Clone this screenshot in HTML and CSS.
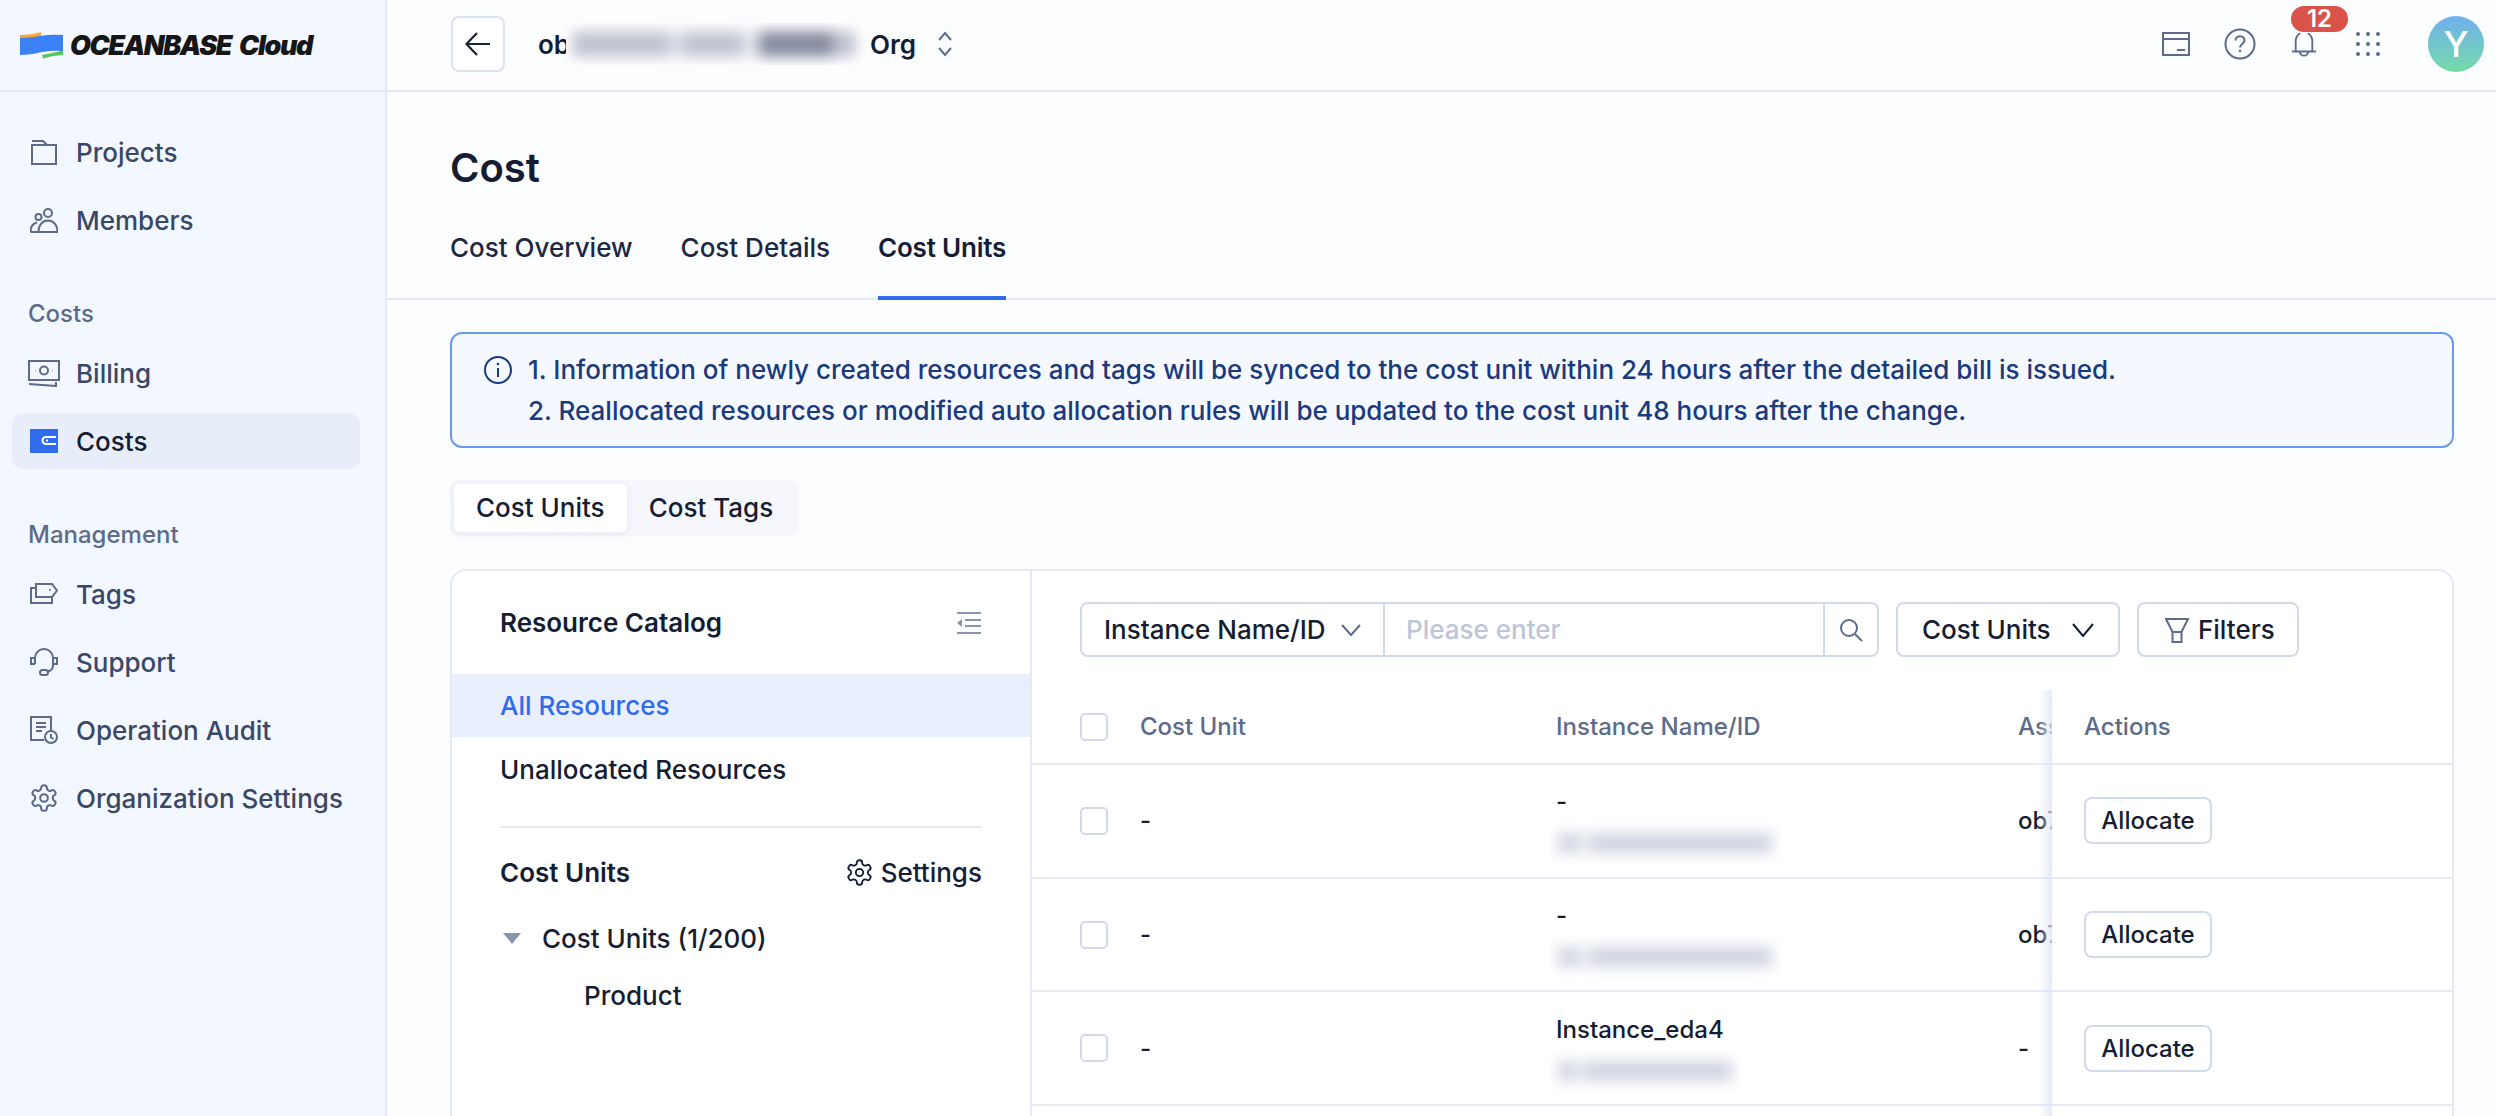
FILE: index.html
```html
<!DOCTYPE html>
<html lang="en">

<head>
  <meta name="viewport" content="width=device-width, initial-scale=1.0" />
  <title>Cost Units</title>
  <link rel="stylesheet" href="styles.css">
</head>

<body>

  <div class="app">

    <aside class="sidebar">
      <div class="logo">
        <svg class="logo-mark" viewBox="0 0 44 28">
          <path d="M0 4 Q12 4 21 1 V5.500 Q12 7.500 0 7.500z" fill="#f5a63c" />
          <path d="M0 7 Q10 7 20 5 Q32 3 43 4 V20 Q32 19 22 21 Q10 24 0 24z" fill="#3a80f6" />
          <path d="M22 24 Q33 22 43 19.500 V24 Q33 24 23 27.500z" fill="#58c45c" />
        </svg>
        <span class="logo-text">OCEANBASE Cloud</span>
      </div>

      <nav class="nav">
        <a class="nav-item">
          <svg class="icon" viewBox="0 0 28 28">
            <path d="M2 3H13L17 7H26V26H2V7H17" />
          </svg>
          Projects
        </a>
        <a class="nav-item">
          <svg class="icon" viewBox="0 0 28 28">
            <circle cx="18" cy="7" r="4" />
            <circle cx="8.500" cy="11" r="3" />
            <path d="M0.500 26H27.500C27.500 19 23.500 14.500 18 14.500C12.500 14.500 8.500 19 8.500 26" />
            <path d="M0.500 26C0.500 21 3 17.500 7 16.500" />
          </svg>
          Members
        </a>

        <div class="nav-group">Costs</div>
        <a class="nav-item">
          <svg class="icon icon-wide" viewBox="0 0 32 28">
            <path d="M1 2H31V21H1z" />
            <circle cx="16" cy="11.500" r="4" />
            <path d="M7 11.500H7.500M24.500 11.500H25M1 25L28 27V23" />
          </svg>
          Billing
        </a>
        <a class="nav-item active">
          <svg class="icon-solid" viewBox="0 0 28 24">
            <rect width="28" height="24" rx="1" fill="#2f6bed" />
            <path d="M26 8H16A3.500 3.500 0 0 0 16 15H26" fill="none" stroke="#fff" stroke-width="2" />
            <path d="M16 11.500H18" stroke="#fff" stroke-width="2" />
          </svg>
          Costs
        </a>

        <div class="nav-group">Management</div>
        <a class="nav-item">
          <svg class="icon" viewBox="0 0 28 28">
            <path d="M6 8V4H22L27 10.500L22 17H6V8" />
            <path d="M6 8H1V23H22V17" />
            <circle cx="20" cy="10" r="1" fill="#5c6b8a" stroke="none" />
          </svg>
          Tags
        </a>
        <a class="nav-item">
          <svg class="icon" viewBox="0 0 28 28">
            <path d="M5 16V10A9 9 0 0 1 23 10V18C23 21 20 23 17 24" />
            <path d="M5 10H1V16H5M23 10H27V16H23" />
            <rect x="10" y="22" width="8" height="5" rx="2.500" />
          </svg>
          Support
        </a>
        <a class="nav-item">
          <svg class="icon" viewBox="0 0 28 28">
            <path d="M21 16V1H1V24H14" />
            <path d="M6 7H16M6 11H16M6 15H12" />
            <circle cx="21" cy="21" r="6" />
            <path d="M21 18V21.500L23.500 23" />
          </svg>
          Operation Audit
        </a>
        <a class="nav-item">
          <svg class="icon" viewBox="1 1 22 22">
            <path stroke-width="1.600" d="M12.220 2h-.44a2 2 0 0 0-2 2v.18a2 2 0 0 1-1 1.730l-.43.250a2 2 0 0 1-2 0l-.15-.08a2 2 0 0 0-2.730.730l-.22.380a2 2 0 0 0 .73 2.730l.15.100a2 2 0 0 1 1 1.720v.510a2 2 0 0 1-1 1.740l-.15.090a2 2 0 0 0-.73 2.730l.22.380a2 2 0 0 0 2.730.730l.15-.08a2 2 0 0 1 2 0l.43.250a2 2 0 0 1 1 1.730V20a2 2 0 0 0 2 2h.44a2 2 0 0 0 2-2v-.18a2 2 0 0 1 1-1.730l.43-.25a2 2 0 0 1 2 0l.15.080a2 2 0 0 0 2.730-.730l.22-.39a2 2 0 0 0-.73-2.730l-.15-.08a2 2 0 0 1-1-1.740v-.5a2 2 0 0 1 1-1.740l.15-.09a2 2 0 0 0 .73-2.730l-.22-.38a2 2 0 0 0-2.730-.73l-.15.080a2 2 0 0 1-2 0l-.43-.25a2 2 0 0 1-1-1.730V4a2 2 0 0 0-2-2z" />
            <circle stroke-width="1.600" cx="12" cy="12" r="3" />
          </svg>
          Organization Settings
        </a>
      </nav>
    </aside>

    <main class="main">

      <header class="topbar">
        <button class="back-btn">
          <svg viewBox="0 0 28 28" width="28" height="28" fill="none" stroke="#1a2338" stroke-width="2.200">
            <path d="M26 14H3M13 3L2.500 14L13 25" />
          </svg>
        </button>
        <div class="org">
          <span>ob</span>
          <span class="blur-box org-blur"><i></i></span>
          <span>Org</span>
          <svg class="updown" viewBox="0 0 16 26" fill="none" stroke="#5c6b8a" stroke-width="2">
            <path d="M2 9L8 2L14 9M2 17L8 24L14 17" />
          </svg>
        </div>

        <div class="top-actions">
          <svg class="top-icon" viewBox="0 0 28 24">
            <path d="M1 1H27V23H1zM1 7H27M15 18H23" />
          </svg>
          <svg class="top-icon help" viewBox="0 0 32 32">
            <circle cx="16" cy="16" r="14.500" />
            <path d="M11.500 12.500C11.500 6.500 20.500 7 20.500 12.500C20.500 15.500 16 16 16 19.500" />
            <circle cx="16" cy="23" r="1.200" fill="#5c6b8a" stroke="none" />
          </svg>
          <div class="bell">
            <svg class="top-icon" viewBox="0 0 28 26">
              <path d="M5 20V9C5 5 7 2 10 0M23 20V9C23 5 21 2 18 0M1 20H27M9.500 20C9.500 26 18.500 26 18.500 20" />
            </svg>
            <span class="badge">12</span>
          </div>
          <svg class="top-icon dots" viewBox="0 0 24 24">
            <circle cx="2" cy="2" r="2" /><circle cx="12" cy="2" r="2" /><circle cx="22" cy="2" r="2" />
            <circle cx="2" cy="12" r="2" /><circle cx="12" cy="12" r="2" /><circle cx="22" cy="12" r="2" />
            <circle cx="2" cy="22" r="2" /><circle cx="12" cy="22" r="2" /><circle cx="22" cy="22" r="2" />
          </svg>
          <div class="avatar">Y</div>
        </div>
      </header>

      <section class="page-head">
        <h1>Cost</h1>
        <div class="tabs">
          <a class="tab">Cost Overview</a>
          <a class="tab">Cost Details</a>
          <a class="tab active">Cost Units</a>
        </div>
      </section>

      <section class="content">

        <div class="alert">
          <svg class="alert-icon" viewBox="0 0 28 28" fill="none" stroke="#1a3a7e" stroke-width="2">
            <circle cx="14" cy="14" r="13" />
            <path d="M14 12V21" />
            <circle cx="14" cy="8" r="1.300" fill="#1a3a7e" stroke="none" />
          </svg>
          <div>
            <div>1. Information of newly created resources and tags will be synced to the cost unit within 24 hours after the detailed bill is issued.</div>
            <div>2. Reallocated resources or modified auto allocation rules will be updated to the cost unit 48 hours after the change.</div>
          </div>
        </div>

        <div class="segmented">
          <a class="segment active">Cost Units</a>
          <a class="segment">Cost Tags</a>
        </div>

        <div class="card">

          <div class="catalog">
            <div class="catalog-head">
              <span>Resource Catalog</span>
              <svg class="collapse" viewBox="0 0 26 22" fill="none" stroke="#8a94ad" stroke-width="2">
                <path d="M1 1H25M9 8H25M9 14H25M1 21H25" />
                <path d="M6 7V15L1 11z" fill="#8a94ad" stroke="none" />
              </svg>
            </div>
            <a class="catalog-row active">All Resources</a>
            <a class="catalog-row">Unallocated Resources</a>
            <div class="catalog-line"></div>
            <div class="units-head">
              <span>Cost Units</span>
              <a class="settings">
                <svg viewBox="1 1 22 22" width="27" height="27" fill="none" stroke="#141d33" stroke-width="1.500">
                  <path d="M12.220 2h-.44a2 2 0 0 0-2 2v.18a2 2 0 0 1-1 1.730l-.43.250a2 2 0 0 1-2 0l-.15-.08a2 2 0 0 0-2.730.730l-.22.380a2 2 0 0 0 .73 2.730l.15.100a2 2 0 0 1 1 1.720v.510a2 2 0 0 1-1 1.740l-.15.090a2 2 0 0 0-.73 2.730l.22.380a2 2 0 0 0 2.730.730l.15-.08a2 2 0 0 1 2 0l.43.250a2 2 0 0 1 1 1.730V20a2 2 0 0 0 2 2h.44a2 2 0 0 0 2-2v-.18a2 2 0 0 1 1-1.730l.43-.25a2 2 0 0 1 2 0l.15.080a2 2 0 0 0 2.730-.730l.22-.39a2 2 0 0 0-.73-2.730l-.15-.08a2 2 0 0 1-1-1.740v-.5a2 2 0 0 1 1-1.740l.15-.09a2 2 0 0 0 .73-2.730l-.22-.38a2 2 0 0 0-2.730-.73l-.15.080a2 2 0 0 1-2 0l-.43-.25a2 2 0 0 1-1-1.730V4a2 2 0 0 0-2-2z" />
                  <circle cx="12" cy="12" r="3" />
                </svg>
                Settings
              </a>
            </div>
            <div class="tree-row">
              <span class="caret"></span>
              Cost Units (1/200)
            </div>
            <div class="tree-row tree-child">Product</div>
          </div>

          <div class="list">
            <div class="toolbar">
              <div class="search-group">
                <div class="search-type">
                  Instance Name/ID
                  <svg class="chev" viewBox="0 0 20 12" fill="none" stroke="#5c6b8a" stroke-width="2">
                    <path d="M1 1L10 11L19 1" />
                  </svg>
                </div>
                <input class="search-input" type="text" placeholder="Please enter" />
                <div class="search-btn">
                  <svg viewBox="0 0 24 24" width="24" height="24" fill="none" stroke="#5c6b8a" stroke-width="2">
                    <circle cx="10" cy="10" r="8" />
                    <path d="M16 16L23 23" />
                  </svg>
                </div>
              </div>
              <div class="tool-btn units-btn">
                Cost Units
                <svg class="chev" viewBox="0 0 22 14" fill="none" stroke="#141d33" stroke-width="2">
                  <path d="M1 1L11 13L21 1" />
                </svg>
              </div>
              <div class="tool-btn filter-btn">
                <svg viewBox="0 0 24 26" width="24" height="26" fill="none" stroke="#5c6b8a" stroke-width="2">
                  <path d="M1 2H23L16.500 15H7.500zM7.500 15V25H16.500V15" />
                </svg>
                Filters
              </div>
            </div>

            <div class="table">
              <div class="tr th">
                <div class="td check"><span class="checkbox"></span></div>
                <div class="td">Cost Unit</div>
                <div class="td">Instance Name/ID</div>
                <div class="td clip">Associated</div>
                <div class="td actions">Actions</div>
              </div>
              <div class="tr">
                <div class="td check"><span class="checkbox"></span></div>
                <div class="td">-</div>
                <div class="td stack">
                  <div class="name">-</div>
                  <span class="blur-box id-long"><i></i></span>
                </div>
                <div class="td clip">ob7a91</div>
                <div class="td actions"><button class="allocate">Allocate</button></div>
              </div>
              <div class="tr">
                <div class="td check"><span class="checkbox"></span></div>
                <div class="td">-</div>
                <div class="td stack">
                  <div class="name">-</div>
                  <span class="blur-box id-long"><i></i></span>
                </div>
                <div class="td clip">ob7a91</div>
                <div class="td actions"><button class="allocate">Allocate</button></div>
              </div>
              <div class="tr">
                <div class="td check"><span class="checkbox"></span></div>
                <div class="td">-</div>
                <div class="td stack">
                  <div class="name">Instance_eda4</div>
                  <span class="blur-box id-short"><i></i></span>
                </div>
                <div class="td clip">-</div>
                <div class="td actions"><button class="allocate">Allocate</button></div>
              </div>
              <div class="tr">
                <div class="td check"></div>
                <div class="td"></div>
                <div class="td"></div>
                <div class="td clip"></div>
                <div class="td actions"></div>
              </div>
            </div>
          </div>

        </div>
      </section>

    </main>
  </div>

</body>

</html>
```
FILE: styles.css
```css
* {
  padding: 0;
  margin: 0;
  box-sizing: border-box;
  font-family: Inter, 'Noto Sans', sans-serif;
}

body {
  height: 100vh;
  overflow: hidden;
  color: #141d33;
  font-size: 26px;
  font-weight: 500;
}

.app {
  display: flex;
  height: 100vh;
  overflow: hidden;
  background-color: #fcfdff;
}

/* sidebar */

.sidebar {
  width: 387px;
  flex-shrink: 0;
  background-color: #f3f7ff;
  border-right: 2px solid #e4e9f3;
}

.logo {
  display: flex;
  align-items: center;
  height: 92px;
  padding-left: 20px;
  border-bottom: 2px solid #e2e7f1;
}

.logo-mark {
  width: 44px;
  height: 28px;
  margin-right: 6px;
}

.logo-text {
  font-size: 27px;
  font-weight: 900;
  font-style: italic;
  letter-spacing: -1.400px;
  word-spacing: 4px;
  white-space: nowrap;
  color: #161616;
}

.nav {
  display: flex;
  flex-direction: column;
  gap: 12px;
  padding: 32px 25px 0 12px;
}

.nav-item {
  display: flex;
  align-items: center;
  gap: 18px;
  height: 56px;
  padding-left: 18px;
  border-radius: 10px;
  color: #3a4766;
}

.nav-item.active {
  background-color: #e8eef9;
  color: #141d33;
}

.nav-group {
  height: 40px;
  line-height: 42px;
  margin-top: 33px;
  padding-left: 16px;
  font-size: 24px;
  color: #5c6b8a;
}

.icon {
  width: 28px;
  height: 28px;
  fill: none;
  stroke: #5c6b8a;
  stroke-width: 2;
  flex-shrink: 0;
}

.icon-wide {
  width: 32px;
  margin: 0 -2px;
}

.icon-solid {
  width: 28px;
  height: 24px;
  flex-shrink: 0;
}

/* top bar */

.main {
  flex: 1;
  min-width: 0;
}

.topbar {
  display: flex;
  align-items: center;
  height: 92px;
  padding: 0 12px 2px 64px;
  border-bottom: 2px solid #e2e7f1;
}

.back-btn {
  display: flex;
  align-items: center;
  justify-content: center;
  width: 54px;
  height: 56px;
  background-color: #ffffff;
  border: 2px solid #dde2ef;
  border-radius: 8px;
}

.org {
  display: flex;
  align-items: center;
  margin-left: 33px;
  font-size: 26px;
  font-weight: 600;
}

.updown {
  width: 16px;
  height: 26px;
  margin-left: 21px;
}

.blur-box {
  display: block;
  overflow: hidden;
  background-color: #ffffff;
}

.blur-box i {
  display: block;
  height: 100%;
  filter: blur(7px);
}

.org-blur {
  width: 300px;
  height: 42px;
  margin-left: -4px;
  margin-right: 4px;
}

.org-blur i {
  margin: 8px 6px;
  height: 26px;
  width: 284px;
  background: linear-gradient(90deg, #bfc3d1 0 34%, #dcdfe7 34% 39%, #bfc3d1 39% 60%, #e4e6ed 60% 66%, #868ca0 66% 92%, #bfc3d1 92%);
}

.top-actions {
  display: flex;
  align-items: center;
  margin-left: auto;
}

.top-icon {
  display: block;
  width: 28px;
  height: 24px;
  fill: none;
  stroke: #5c6b8a;
  stroke-width: 2;
}

.top-icon.help {
  width: 32px;
  height: 32px;
  margin: 0 34px 0 34px;
}

.bell {
  position: relative;
  width: 28px;
  margin-top: 2px;
}

.badge {
  position: absolute;
  left: 1px;
  top: -27px;
  min-width: 57px;
  height: 26px;
  line-height: 26px;
  border-radius: 13px;
  background-color: #d9534b;
  color: #ffffff;
  text-align: center;
  font-size: 24px;
  font-weight: 600;
}

.top-icon.dots {
  width: 24px;
  height: 24px;
  margin: 0 48px 0 38px;
  fill: #5c6b8a;
  stroke: none;
}

.avatar {
  width: 56px;
  height: 56px;
  line-height: 56px;
  border-radius: 50%;
  text-align: center;
  font-size: 36px;
  font-weight: 500;
  color: #ffffff;
  background: linear-gradient(#6fb0ee, #75dba9);
}

/* page head */

.page-head {
  padding: 51px 0 0 63px;
  border-bottom: 2px solid #e3e8f2;
  height: 208px;
}

h1 {
  font-size: 40px;
  line-height: 50px;
  font-weight: 600;
}

.tabs {
  display: flex;
  gap: 48px;
  margin-top: 33px;
}

.tab {
  height: 74px;
  line-height: 40px;
  padding-top: 2px;
  color: #1d2740;
}

.tab.active {
  font-weight: 600;
  letter-spacing: -0.200px;
  color: #141d33;
  border-bottom: 4px solid #2f6bed;
}

/* content */

.content {
  padding: 32px 42px 0 63px;
}

.alert {
  display: flex;
  gap: 16px;
  height: 116px;
  padding: 15px 32px;
  background-color: #f6f8ff;
  border: 2px solid #6a9aea;
  border-radius: 12px;
  color: #1a3a7e;
  line-height: 41px;
}

.alert-icon {
  width: 28px;
  height: 28px;
  margin-top: 7px;
  flex-shrink: 0;
}

.segmented {
  display: inline-flex;
  height: 56px;
  margin-top: 32px;
  padding: 4px;
  background-color: #f5f7fc;
  border-radius: 8px;
}

.segment {
  padding: 0 22px;
  line-height: 48px;
  border-radius: 6px;
}

.segment.active {
  background-color: #ffffff;
  box-shadow: 0 2px 8px rgba(30, 50, 100, 0.08);
}

.card {
  display: flex;
  height: 800px;
  margin-top: 33px;
  background-color: #ffffff;
  border: 2px solid #e4e9f5;
  border-radius: 16px;
}

/* resource catalog */

.catalog {
  width: 580px;
  flex-shrink: 0;
  border-right: 2px solid #e4e9f5;
}

.catalog-head {
  display: flex;
  align-items: center;
  justify-content: space-between;
  height: 103px;
  padding: 0 48px 0 48px;
  font-weight: 600;
}

.collapse {
  width: 26px;
  height: 22px;
}

.catalog-row {
  display: block;
  height: 63px;
  line-height: 65px;
  padding-left: 48px;
}

.catalog-row.active {
  background-color: #e9effc;
  color: #2f6bed;
  line-height: 63px;
}

.catalog-line {
  height: 2px;
  margin: 26px 48px 0 48px;
  background-color: #e4e9f5;
}

.units-head {
  display: flex;
  align-items: center;
  justify-content: space-between;
  height: 32px;
  margin: 28px 48px 22px 48px;
  font-weight: 600;
}

.settings {
  display: flex;
  align-items: center;
  gap: 8px;
  font-weight: 500;
}

.tree-row {
  display: flex;
  align-items: center;
  height: 57px;
  padding-left: 51px;
}

.tree-child {
  padding-left: 132px;
}

.caret {
  width: 0;
  height: 0;
  margin-right: 21px;
  border-left: 9px solid transparent;
  border-right: 9px solid transparent;
  border-top: 11px solid #8a94ad;
}

/* list */

.list {
  flex: 1;
  min-width: 0;
  padding-top: 31px;
}

.toolbar {
  display: flex;
  gap: 17px;
  height: 55px;
  padding-left: 48px;
}

.search-group {
  display: flex;
  width: 799px;
  border: 2px solid #d3d9e9;
  border-radius: 8px;
}

.search-type {
  display: flex;
  align-items: center;
  justify-content: space-between;
  width: 301px;
  padding: 0 22px 0 22px;
  white-space: nowrap;
}

.chev {
  width: 20px;
  height: 12px;
}

.search-input {
  flex: 1;
  min-width: 0;
  padding: 0 21px;
  border: none;
  border-left: 2px solid #d3d9e9;
  border-right: 2px solid #d3d9e9;
  font-size: 26px;
  font-weight: 500;
  background: transparent;
}

.search-input::placeholder {
  color: #bcc5d9;
}

.search-btn {
  display: flex;
  align-items: center;
  justify-content: center;
  width: 52px;
}

.tool-btn {
  display: flex;
  align-items: center;
  border: 2px solid #d3d9e9;
  border-radius: 8px;
  white-space: nowrap;
}

.units-btn {
  width: 224px;
  padding-left: 24px;
  gap: 21px;
}

.units-btn .chev {
  width: 22px;
  height: 14px;
}

.filter-btn {
  width: 162px;
  padding-left: 26px;
  gap: 9px;
}

.table {
  margin-top: 33px;
  font-size: 24px;
}

.tr {
  display: grid;
  grid-template-columns: 108px 416px 462px 34px 1fr;
  height: 113.700px;
  border-bottom: 2px solid #e4e9f5;
}

.th {
  height: 75px;
  color: #5c6b8a;
}

.td {
  display: flex;
  align-items: center;
  min-width: 0;
  white-space: nowrap;
}

.check {
  padding-left: 48px;
}

.checkbox {
  width: 28px;
  height: 28px;
  background-color: #ffffff;
  border: 2px solid #d3d9e9;
  border-radius: 5px;
}

.stack {
  flex-direction: column;
  align-items: flex-start;
  justify-content: center;
  padding-top: 5px;
}

.name {
  line-height: 40px;
}

.blur-box.id-long {
  width: 230px;
  height: 42px;
  margin-left: -6px;
}

.blur-box.id-short {
  width: 190px;
  height: 42px;
  margin-left: -6px;
}

.blur-box.id-long i,
.blur-box.id-short i {
  margin: 11px 8px;
  height: 20px;
  background: linear-gradient(90deg, #d0d4e1 0 9%, #e6e8ef 9% 16%, #d0d4e1 16%);
}

.clip {
  overflow: hidden;
}

.actions {
  position: relative;
  padding-left: 32px;
  background-color: #ffffff;
}

/* fixed column edge */
.actions::before {
  content: "";
  position: absolute;
  left: -14px;
  top: 0;
  bottom: -2px;
  width: 14px;
  background: linear-gradient(90deg, rgba(225, 230, 245, 0), rgba(225, 230, 245, 0.8));
}

.allocate {
  width: 128px;
  height: 47px;
  background-color: #ffffff;
  border: 2px solid #d3d9e9;
  border-radius: 8px;
  color: #141d33;
  font-size: 24px;
  font-weight: 500;
}
```
